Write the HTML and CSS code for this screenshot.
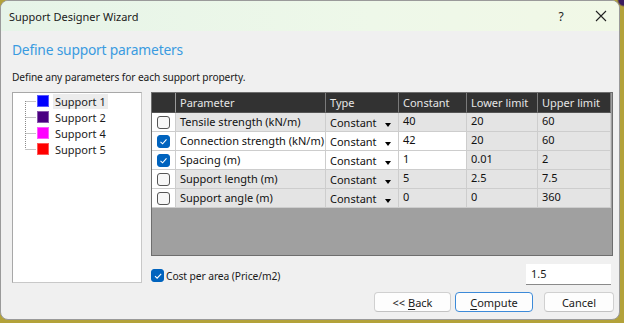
FILE: index.html
```html
<!DOCTYPE html>
<html>
<head>
<meta charset="utf-8">
<link rel="stylesheet" href="styles.css">
</head>
<body>
<div class="window">
  <div class="titlebar">
    <span class="title">Support Designer Wizard</span>
    <span class="tb-btn help">?</span>
    <span class="tb-btn close">
      <svg width="12" height="12" viewBox="0 0 12 12"><path d="M1 1 L11 11 M11 1 L1 11" stroke="#222" stroke-width="1.1" fill="none"/></svg>
    </span>
  </div>
  <div class="content">
    <h1 class="heading">Define support parameters</h1>
    <p class="subtitle">Define any parameters for each support property.</p>
    <div class="main">
      <div class="tree">
        <svg class="tree-lines" width="12" height="64" viewBox="0 0 12 64">
          <path d="M0.5 8 V56 M0.5 8.5 H11 M0.5 24.5 H11 M0.5 40.5 H11 M0.5 56.5 H11" stroke="#8a8a8a" stroke-width="1" stroke-dasharray="1 1" fill="none"/>
        </svg>
        <ul class="tree-items">
          <li class="tree-item"><span class="swatch sw-blue"></span><span class="tree-label selected">Support 1</span></li>
          <li class="tree-item"><span class="swatch sw-indigo"></span><span class="tree-label">Support 2</span></li>
          <li class="tree-item"><span class="swatch sw-magenta"></span><span class="tree-label">Support 4</span></li>
          <li class="tree-item"><span class="swatch sw-red"></span><span class="tree-label">Support 5</span></li>
        </ul>
      </div>
      <div class="right">
        <div class="grid">
          <div class="row head">
            <div class="cell"></div>
            <div class="cell">Parameter</div>
            <div class="cell">Type</div>
            <div class="cell">Constant</div>
            <div class="cell">Lower limit</div>
            <div class="cell">Upper limit</div>
          </div>
          <div class="row">
            <div class="cell cbcell"><span class="cb"></span></div>
            <div class="cell">Tensile strength (kN/m)</div>
            <div class="cell type">Constant<span class="arrow"></span></div>
            <div class="cell num">40</div>
            <div class="cell num">20</div>
            <div class="cell num">60</div>
          </div>
          <div class="row active">
            <div class="cell cbcell"><span class="cb checked"><svg width="9" height="9" viewBox="0 0 9 9"><path d="M1.5 4.8 L3.6 6.8 L7.5 2.4" stroke="#fff" stroke-width="1.1" fill="none"/></svg></span></div>
            <div class="cell w">Connection strength (kN/m)</div>
            <div class="cell type w">Constant<span class="arrow"></span></div>
            <div class="cell num w">42</div>
            <div class="cell num">20</div>
            <div class="cell num">60</div>
          </div>
          <div class="row active">
            <div class="cell cbcell"><span class="cb checked"><svg width="9" height="9" viewBox="0 0 9 9"><path d="M1.5 4.8 L3.6 6.8 L7.5 2.4" stroke="#fff" stroke-width="1.1" fill="none"/></svg></span></div>
            <div class="cell w">Spacing (m)</div>
            <div class="cell type w">Constant<span class="arrow"></span></div>
            <div class="cell num w">1</div>
            <div class="cell num">0.01</div>
            <div class="cell num">2</div>
          </div>
          <div class="row">
            <div class="cell cbcell"><span class="cb"></span></div>
            <div class="cell">Support length (m)</div>
            <div class="cell type">Constant<span class="arrow"></span></div>
            <div class="cell num">5</div>
            <div class="cell num">2.5</div>
            <div class="cell num">7.5</div>
          </div>
          <div class="row">
            <div class="cell cbcell"><span class="cb"></span></div>
            <div class="cell">Support angle (m)</div>
            <div class="cell type">Constant<span class="arrow"></span></div>
            <div class="cell num">0</div>
            <div class="cell num">0</div>
            <div class="cell num">360</div>
          </div>
        </div>
        <div class="cost-row">
          <label class="cost">
            <span class="cb checked"><svg width="10" height="10" viewBox="0 0 10 10"><path d="M2 5.2 L4.1 7.2 L8.2 2.8" stroke="#fff" stroke-width="1.1" fill="none"/></svg></span>
            <span class="cost-label">Cost per area (Price/m2)</span>
          </label>
          <div class="textbox">1.5</div>
        </div>
      </div>
    </div>
    <div class="buttons">
      <button class="btn back">&lt;&lt; <u>B</u>ack</button>
      <button class="btn primary"><u>C</u>ompute</button>
      <button class="btn cancel">Cancel</button>
    </div>
  </div>
</div>
</body>
</html>
```

FILE: styles.css
```css
* { box-sizing: border-box; }
html, body { margin: 0; padding: 0; }
body {
  width: 624px;
  height: 323px;
  overflow: hidden;
  background: radial-gradient(circle at 624px 0px, #3a1b5e 0px, #3a1b5e 5px, rgba(0,0,0,0) 7px), #b3a23a;
  font-family: "Noto Sans", "Open Sans", sans-serif;
  color: #1a1a1a;
}
.window {
  width: 620px;
  height: 320px;
  background: #f0f0f0;
  border: 1px solid #9a9a9a;
  border-radius: 8px;
  overflow: hidden;
  display: flex;
  flex-direction: column;
}
.titlebar {
  height: 30px;
  flex: none;
  display: flex;
  align-items: center;
  background: linear-gradient(90deg, #e6f4e8 0%, #eef8e9 60%, #f1f8e6 100%);
  padding-left: 8px;
}
.title {
  font-size: 11px;
  flex: 1;
  color: #1a1a1a;
}
.tb-btn {
  display: flex;
  align-items: center;
  justify-content: center;
  height: 30px;
}
.help { width: 44px; font-size: 12px; }
.close { width: 36px; }
.content {
  flex: 1;
  display: flex;
  flex-direction: column;
  padding: 0 0 0 11px;
}
.heading {
  margin: 8px 0 0 0;
  font-size: 13.8px;
  letter-spacing: -0.2px;
  font-weight: normal;
  color: #3a9be0;
  line-height: 22px;
}
.subtitle {
  margin: 8px 0 0 0;
  font-size: 10.2px;
  letter-spacing: -0.1px;
  line-height: 16px;
}
.main {
  display: flex;
  margin-top: 7px;
  gap: 9px;
}
.tree {
  width: 130px;
  height: 191px;
  background: #fff;
  border: 1px solid #a8a8a8;
  border-right-color: #c8c8c8;
  border-bottom-color: #c8c8c8;
  display: flex;
  align-items: flex-start;
  padding-left: 12px;
}
.tree-lines { flex: none; }
.tree-items {
  list-style: none;
  margin: 0;
  padding: 0;
}
.tree-item {
  height: 16px;
  display: flex;
  align-items: center;
  font-size: 11px;
}
.swatch {
  width: 12px;
  height: 12px;
  margin-right: 4px;
  border: 1px solid rgba(255,255,255,0.35);
}
.sw-blue { background: #0000ff; }
.sw-indigo { background: #4b0082; }
.sw-magenta { background: #ff00ff; }
.sw-red { background: #ff0000; }
.tree-label {
  padding: 0 2px;
  line-height: 15px;
}
.tree-label.selected { background: #ececec; }
.right {
  display: flex;
  flex-direction: column;
}
.grid {
  width: 462px;
  height: 164px;
  background: #a0a0a0;
  border: 1px solid #6e6e6e;
}
.row {
  display: grid;
  grid-template-columns: 24px 150px 73px 68px 71px 73px;
  height: 19px;
}
.row.head { height: 20px; }
.cell {
  border-right: 1px solid #cdcdcd;
  border-bottom: 1px solid #cdcdcd;
  background: #e4e4e4;
  font-size: 11px;
  line-height: 17px;
  padding-left: 4px;
  white-space: nowrap;
  overflow: hidden;
  color: #111;
}
.cell.w { background: #fff; }
.head .cell {
  background: #323232;
  color: #e6e6e6;
  border-right: 1px solid #7a7a7a;
  border-bottom: 1px solid #555;
  line-height: 19px;
}
.head .cell:first-child { border-right-color: #9a9a9a; }
.cbcell {
  background: #fff;
  padding: 0;
  display: flex;
  align-items: center;
  justify-content: center;
}
.num { line-height: 15px; }
.type {
  display: flex;
  align-items: center;
  justify-content: space-between;
  padding-right: 7px;
}
.arrow {
  width: 0;
  height: 0;
  border-left: 3.5px solid transparent;
  border-right: 3.5px solid transparent;
  border-top: 4px solid #000;
  margin-top: 5px;
}
.cb {
  width: 13px;
  height: 13px;
  border: 1px solid #555;
  border-radius: 3px;
  background: #f7f7f7;
  display: flex;
  align-items: center;
  justify-content: center;
  flex: none;
}
.cb.checked {
  background: #0063be;
  border-color: #0063be;
}
.cost-row {
  display: flex;
  align-items: center;
  justify-content: space-between;
  margin-top: 8px;
  height: 21px;
}
.cost {
  display: flex;
  align-items: center;
  gap: 2px;
  font-size: 10.3px;
  letter-spacing: -0.1px;
  margin-top: 2px;
}
.textbox {
  width: 85px;
  height: 21px;
  background: #fff;
  border-bottom: 1px solid #8a8a8a;
  font-size: 11px;
  line-height: 20px;
  padding-left: 5px;
  margin-right: 2px;
}
.buttons {
  display: flex;
  justify-content: flex-end;
  margin-top: 7px;
  padding-right: 5px;
}
.btn {
  height: 20px;
  background: #fdfdfd;
  border: 1px solid #d0d0d0;
  border-bottom-color: #c2c2c2;
  border-radius: 4px;
  font-family: "Noto Sans", "Open Sans", sans-serif;
  font-size: 11px;
  color: #1a1a1a;
  padding: 0;
  line-height: 17px;
}
.btn u { text-decoration: underline; text-underline-offset: 2px; }
.back { width: 77px; }
.btn.primary { width: 78px; margin-left: 4px; border: 1px solid #3c8ad8; }
.btn.cancel { width: 70px; margin-left: 11px; }
```
